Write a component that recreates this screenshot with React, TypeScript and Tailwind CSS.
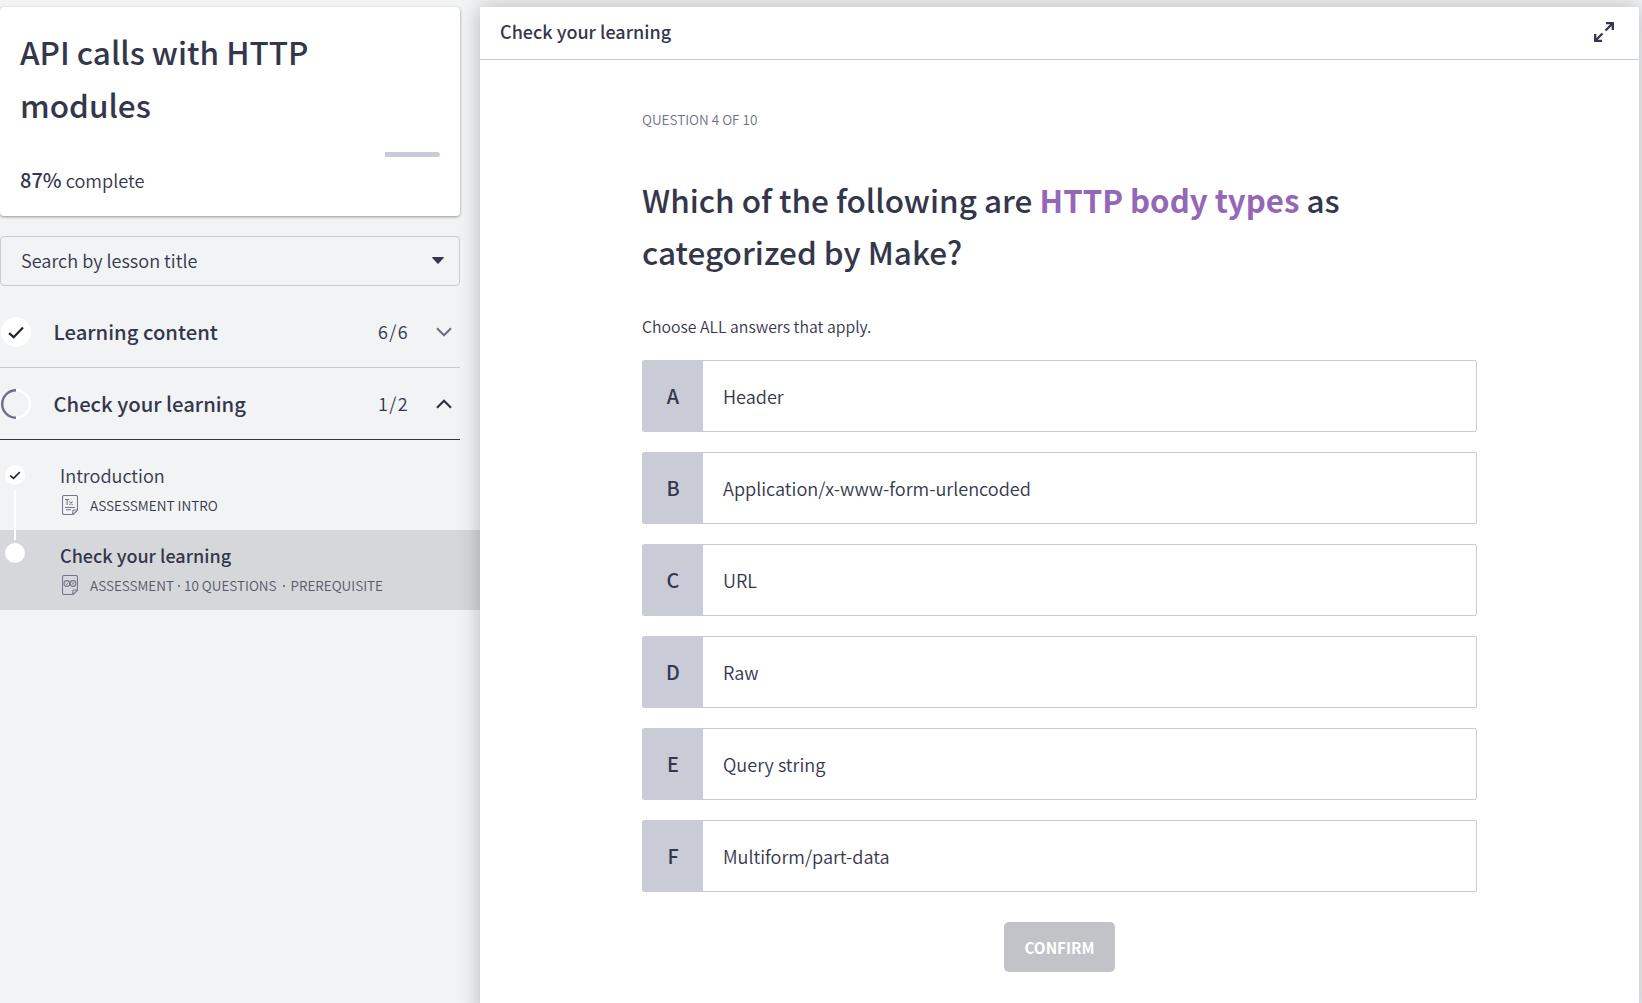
import type { ReactNode } from "react";

const answers = [
  { key: "A", text: "Header" },
  { key: "B", text: "Application/x-www-form-urlencoded" },
  { key: "C", text: "URL" },
  { key: "D", text: "Raw" },
  { key: "E", text: "Query string" },
  { key: "F", text: "Multiform/part-data" },
];

function DoneCircle() {
  return (
    <svg width="32" height="32" viewBox="0 0 32 32" className="block shrink-0">
      <circle cx="16" cy="16" r="15" fill="#fff" />
      <path d="M9 17.2L13.7 21.2L23 11.5" fill="none" stroke="#22242c" strokeWidth="2.2" />
    </svg>
  );
}

function HalfCircle() {
  return (
    <svg width="32" height="32" viewBox="0 0 32 32" className="block shrink-0" fill="none" strokeWidth="2.4">
      <path d="M16 2.2A13.8 13.8 0 0 1 16 29.8" stroke="#fff" />
      <path d="M16 2.2A13.8 13.8 0 0 0 16 29.8" stroke="#6c6f83" />
    </svg>
  );
}

function Chevron({ up }: { up?: boolean }) {
  return (
    <svg width="16" height="10" viewBox="0 0 16 10" className="block shrink-0" fill="none" strokeWidth="2.2">
      {up ? (
        <path d="M1 8.7L8 1.7L15 8.7" stroke="#2f3242" />
      ) : (
        <path d="M1 1.3L8 8.3L15 1.3" stroke="#6f7286" />
      )}
    </svg>
  );
}

function DocIcon({ children }: { children: ReactNode }) {
  return (
    <svg width="16" height="20" viewBox="0 0 16 20" className="block shrink-0" fill="none" stroke="#74778a" strokeWidth="1.1">
      <path d="M2 .5H14A1.5 1.5 0 0 1 15.5 2V15.2L11.2 19.5H2A1.5 1.5 0 0 1 .5 18V2A1.5 1.5 0 0 1 2 .5Z" />
      <path d="M15.5 15H11.8A1 1 0 0 0 10.8 16V19.5" />
      {children}
    </svg>
  );
}

function SectionRow({ icon, title, count, up }: { icon: ReactNode; title: string; count: string; up?: boolean }) {
  return (
    <div className={"flex h-[72px] w-[460px] items-center border-b pr-2 " + (up ? "border-[#2f3242]" : "border-[#c8cacf]")}>
      {icon}
      <div className="ml-[21.5px] flex-1 text-[20.25px] font-medium leading-[30px]">{title}</div>
      <div className="mr-[27px] pb-[2px] text-[18px] leading-[30px] tracking-[1.4px]">{count}</div>
      <Chevron up={up} />
    </div>
  );
}

function Dot({ className }: { className: string }) {
  return <span className={"mt-[2px] size-[2px] rounded-full bg-[#55586c] " + className} />;
}

export default function App() {
  return (
    <div className="flex h-[1003px] w-[1642px] overflow-hidden bg-[#f1f3f5] pt-[7px] font-['Noto_Sans_CJK_SC',sans-serif] font-[350] text-[#34374b] whitespace-nowrap">
      <aside className="w-[480px] shrink-0">
        <div className="h-[209px] w-[460px] rounded bg-white px-5 pt-[18px] shadow-[0_1px_3px_rgba(0,0,0,0.4)]">
          <h1 className="text-[31.5px] font-medium leading-[52.5px]">
            API calls with HTTP
            <br />
            modules
          </h1>
          <div className="mt-[22px] flex h-[5px] justify-end overflow-hidden rounded-full bg-white">
            <div className="w-[55px] rounded-r-full bg-[#c9ccd6]" />
          </div>
          <div className="mt-2 text-[18.15px] leading-[30px]">
            <span className="text-[20px] font-medium">87%</span> complete
          </div>
        </div>

        <div className="mt-5 flex h-[50px] w-[460px] items-center justify-between rounded border border-[#c9ccd6] pl-5 pr-[15px]">
          <span className="pb-[2px] text-[18.1px] leading-[30px]">Search by lesson title</span>
          <svg width="12" height="7" viewBox="0 0 12 7" className="mb-px block">
            <path d="M.6 0H11.4Q12.2 .2 11.6 1L6.6 6.6Q6 7.1 5.4 6.6L.4 1Q-.2 .2 .6 0Z" fill="#34374b" />
          </svg>
        </div>

        <div className="mt-[10px]">
          <SectionRow icon={<DoneCircle />} title="Learning content" count="6/6" />
          <SectionRow icon={<HalfCircle />} title="Check your learning" count="1/2" up />
        </div>

        <div className="mt-[10px] flex h-20">
          <div className="flex w-[60px] flex-col pl-[5px] pt-[15px]">
            <svg width="20" height="20" viewBox="0 0 20 20" className="block shrink-0">
              <circle cx="10" cy="10" r="10" fill="#fff" />
              <path d="M5.2 10.6L8.6 13.4L14.8 7" fill="none" stroke="#22242c" strokeWidth="1.7" />
            </svg>
            <div className="relative z-10 ml-[9px] mt-[5px] h-[50px] w-[2px] shrink-0 bg-white" />
          </div>
          <div className="pt-[10px]">
            <div className="text-[18.1px] leading-[30px]">Introduction</div>
            <div className="mt-[3px] flex items-center gap-3 pl-[2px]">
              <DocIcon>
                <path d="M3 4.5H7.2M5.1 4.5V10M7.4 6.5L10.6 10M10.6 6.5L7.4 10M3 12.5H13M4 14.8H9" />
              </DocIcon>
              <span className="text-[13.6px] leading-6">ASSESSMENT INTRO</span>
            </div>
          </div>
        </div>

        <div className="flex h-20 bg-[#d6d7db]">
          <div className="w-[60px] pl-[5px] pt-[13px]">
            <div className="size-5 rounded-full bg-white" />
          </div>
          <div className="pt-[10px]">
            <div className="text-[18px] font-medium leading-[30px]">Check your learning</div>
            <div className="mt-[3px] flex items-center pl-[2px] text-[13.5px] leading-6 text-[#55586c]">
              <DocIcon>
                <circle cx="4.9" cy="8.5" r="2.9" />
                <circle cx="11.1" cy="8.5" r="2.9" />
                <path strokeWidth=".9" d="M3.5 8.6L4.6 9.7L6.4 7.4M10 7.4L12.2 9.6M12.2 7.4L10 9.6" />
              </DocIcon>
              <span className="ml-3">ASSESSMENT</span>
              <Dot className="mx-1" />
              <span>10 QUESTIONS</span>
              <Dot className="mx-[6px]" />
              <span>PREREQUISITE</span>
            </div>
          </div>
        </div>
      </aside>

      <main className="relative h-[1010px] w-[1159px] shrink-0 bg-white shadow-[0_0_20px_rgba(0,0,0,0.25)]">
        <header className="flex h-[53px] items-center justify-between border-b border-[#c9ccd6] pl-5 pr-[25px]">
          <h2 className="pb-1 text-[18px] font-medium leading-[30px]">Check your learning</h2>
          <svg width="20" height="20" viewBox="0 0 20 20" className="mb-[2px] block" fill="none" stroke="#34374b" strokeWidth="2.3">
            <path d="M12 1.2H18.8V8M18.8 1.2L11.5 8.5M8 18.8H1.2V12M1.2 18.8L8.5 11.5" />
          </svg>
        </header>

        <section className="ml-[162px] w-[835px] pt-[47px]">
          <div className="text-[13.5px] leading-6 text-[#6f7286]">QUESTION 4 OF 10</div>
          <h3 className="mt-[42px] text-[31.5px] font-medium leading-[52px]">
            Which of the following are <b className="text-[31.2px] font-bold leading-none text-[#9467b8]">HTTP body types</b> as
            <br />
            categorized by Make?
          </h3>
          <div className="mt-[37px] text-[15.8px] leading-[26px]">Choose ALL answers that apply.</div>
          <div className="mt-5 flex flex-col gap-5">
            {answers.map((a) => (
              <div key={a.key} className="flex h-[72px] overflow-hidden rounded-[2px] border border-[#c9ccd6] bg-white">
                <div className="flex w-[60px] items-center justify-center bg-[#c9ccd6] text-[19.8px] font-medium leading-[30px]">{a.key}</div>
                <div className="flex items-center pl-5 text-[18.1px] leading-[30px]">{a.text}</div>
              </div>
            ))}
          </div>
          <button className="mx-auto mt-[30px] flex h-[50px] w-[111px] items-center justify-center rounded-[5px] bg-[#c2c3c9] text-[15.3px] font-bold text-white">
            CONFIRM
          </button>
        </section>
      </main>
    </div>
  );
}
